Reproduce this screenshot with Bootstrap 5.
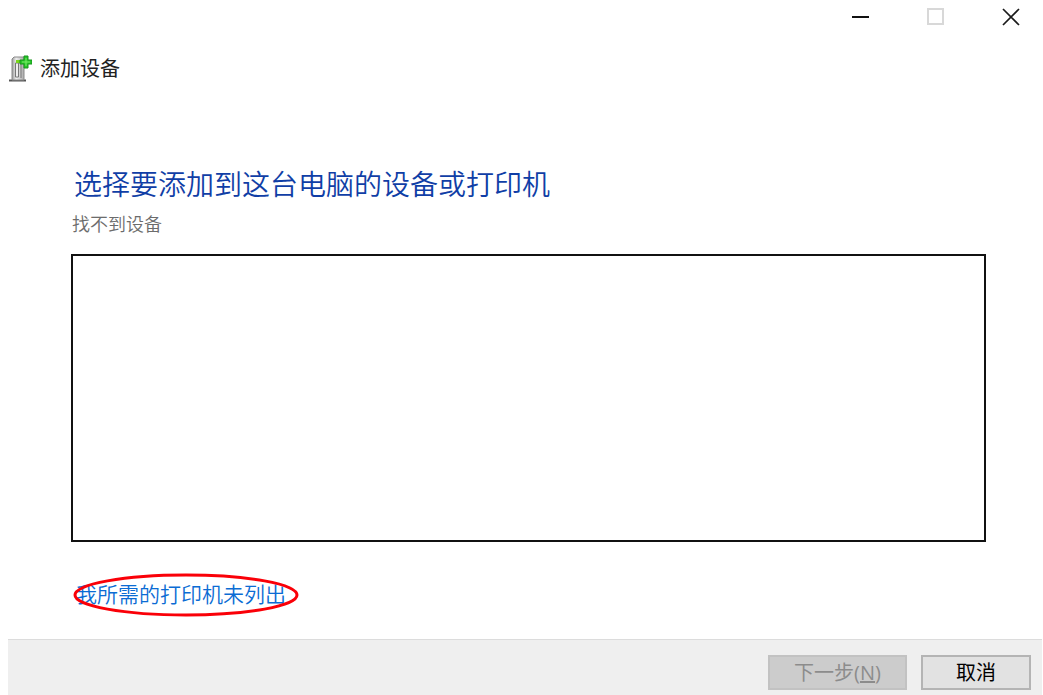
<!DOCTYPE html>
<html lang="zh-CN">
<head>
<meta charset="utf-8">
<meta name="viewport" content="width=device-width, initial-scale=1">
<title>添加设备</title>
<link href="https://cdn.jsdelivr.net/npm/bootstrap@5.3.0/dist/css/bootstrap.min.css" rel="stylesheet">
<style>
  body { font-family: "Open Sans", "Noto Sans CJK SC", sans-serif; font-size: 20px; line-height: 32px; color: #222; background: #fff; }
  .caption-bar { gap: 11px; }
  .caption-btn { width: 64px; height: 34px; border: 0; background: transparent; }
  .wizard-title { height: 70px; padding-left: 8px; gap: 8px; }
  .wizard-body { padding: 60px 57px 28px 71px; }
  .wizard-heading { font-size: 28px; line-height: 40px; font-weight: 350; color: #103ea6; margin: 0 0 6px 3px; }
  .wizard-status { font-size: 18px; line-height: 28px; font-weight: 350; color: #6c6c6c; margin: 0 0 16px 1px; }
  .device-list { border: 2px solid #111; min-height: 240px; margin-bottom: 36px; }
  .missing-link { font-size: 21px; font-weight: 350; color: #0b6cd4; margin-left: 5px; }
  .marker { top: -5px; left: -2px; }
  .wizard-footer { height: 56px; background: #efefef; border-top: 1px solid #dcdcdc; margin: 0 1px 0 8px; padding: 0 11px 5px 0; gap: 14px; }
  .wizard-btn { height: 35px; padding: 0; border: 2px solid #b4b4b4; border-radius: 0; background: #e2e2e2; font-size: 20px; line-height: 30px; color: #000; width: 110px; }
  .wizard-btn-next, .wizard-btn-next:disabled { width: 139px; background: #ccc; border-color: #c2c2c2; color: #8c8c8c; opacity: 1; }
</style>
</head>
<body class="d-flex flex-column min-vh-100">
  <div class="caption-bar d-flex justify-content-end">
    <button class="caption-btn d-flex align-items-center justify-content-center p-0" type="button" aria-label="最小化"><svg width="18" height="18"><path d="M0 9h17" stroke="#111" stroke-width="2"/></svg></button>
    <button class="caption-btn d-flex align-items-center justify-content-center p-0" type="button" aria-label="最大化" disabled><svg width="18" height="18"><rect x="1" y="1" width="15" height="15" fill="none" stroke="#d8d8d8" stroke-width="2"/></svg></button>
    <button class="caption-btn d-flex align-items-center justify-content-center p-0" type="button" aria-label="关闭"><svg width="18" height="18"><path d="M1 1l16 16M17 1L1 17" stroke="#1a1a1a" stroke-width="1.7"/></svg></button>
  </div>

  <header class="wizard-title d-flex align-items-center">
    <svg width="24" height="28" viewBox="0 0 24 28" aria-hidden="true">
      <defs><linearGradient id="metal"><stop offset="0" stop-color="#999"/><stop offset=".35" stop-color="#eee"/><stop offset="1" stop-color="#aaa"/></linearGradient></defs>
      <path d="M1 25.500h17" stroke="#555" stroke-width="2"/>
      <path d="M4 25V4l2-2h10v23z" fill="url(#metal)" stroke="#8a8a8a"/>
      <path d="M7.500 22V8h3v14z" fill="#eee" stroke="#777"/>
      <path d="M13 9v14" stroke="#777"/>
      <path d="M8 6.500h4" stroke="#79d51c" stroke-width="3"/>
      <path d="M16 1h4v4h4v4h-4v4h-4V9h-4V5h4z" fill="#28c52b" stroke="#16951b"/>
      <path d="M18 3v8M14 7h8" stroke="#7bec68"/>
    </svg>
    <span>添加设备</span>
  </header>

  <main class="wizard-body d-flex flex-column flex-grow-1">
    <h1 class="wizard-heading">选择要添加到这台电脑的设备或打印机</h1>
    <p class="wizard-status" id="status">找不到设备</p>
    <div class="device-list flex-grow-1" role="listbox" tabindex="0" aria-labelledby="status"></div>
    <div class="position-relative align-self-start">
      <a class="missing-link text-decoration-none" href="#">我所需的打印机未列出</a>
      <svg class="marker position-absolute pe-none" width="232" height="44" viewBox="0 0 232 44" aria-hidden="true"><ellipse cx="117" cy="22" rx="111" ry="20" fill="none" stroke="#fa0008" stroke-width="3"/></svg>
    </div>
  </main>

  <footer class="wizard-footer d-flex align-items-end justify-content-end">
    <button class="btn wizard-btn wizard-btn-next" type="button" disabled>下一步(<u>N</u>)</button>
    <button class="btn wizard-btn" type="button">取消</button>
  </footer>
<script src="https://cdn.jsdelivr.net/npm/bootstrap@5.3.0/dist/js/bootstrap.bundle.min.js"></script>
</body>
</html>
